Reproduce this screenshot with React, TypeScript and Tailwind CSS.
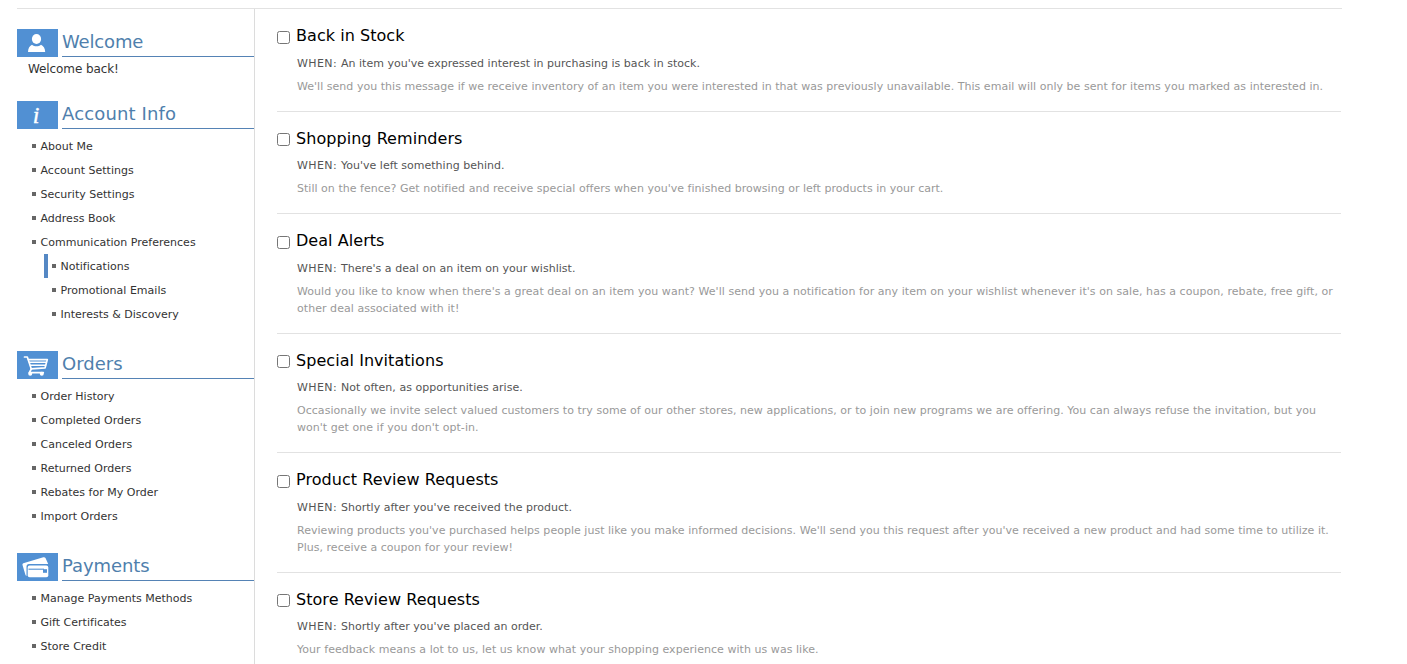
import type { ReactNode } from "react";

const UserIcon = () => (
  <svg width="41" height="28" viewBox="0 0 41 28" fill="#fff">
    <ellipse cx="19.500" cy="10" rx="4.600" ry="5" />
    <path d="M11 23c.2-3.500 1.300-6 4-7.200 2.500 2 6.500 2 9 0 2.700 1.200 4 3.700 4.200 7.200z" />
  </svg>
);

const InfoIcon = () => (
  <span className="mr-[3px] font-['Liberation_Serif',serif] text-[24px] leading-[28px] text-white italic [-webkit-text-stroke:0.4px_white]">i</span>
);

const CartIcon = () => (
  <svg width="41" height="28" viewBox="0 0 41 28" fill="none" stroke="#fff" strokeLinecap="round" strokeLinejoin="round">
    <path d="M7.500 6h2.800L14.300 18l-2 3.600h14" strokeWidth="1.700" />
    <path d="M11.500 8.600h18.800l-2.200 8.200-14 1" strokeWidth="1.700" />
    <path d="M12.500 11.300h16.500M13.500 14.200h15" strokeWidth="1.500" />
    <circle cx="13.200" cy="22.700" r="2" fill="#fff" stroke="none" />
    <circle cx="24.800" cy="22.700" r="2" fill="#fff" stroke="none" />
  </svg>
);

const WalletIcon = () => (
  <svg width="41" height="28" viewBox="0 0 41 28">
    <path d="M6.300 10.300 26.300 4.300q1.500-.4 2.200.8l2.700 5.900H12q-2.500 0-2.500 2.500v9.500q-.8-.3-1.100-1.200L5.500 12q-.4-1.300.8-1.700z" fill="#fff" />
    <path d="M12.700 12.400h16.600q2 0 2 2v7.900q0 2-2 2H12.700q-2 0-2-2v-7.900q0-2 2-2z" fill="#fff" />
    <path d="M11.500 16.200h15.500" stroke="#5190d3" strokeWidth="1.100" />
    <path d="M26 16.200h4v3.600h-4z" fill="#5190d3" />
  </svg>
);

function Heading({ icon, spacing, children }: { icon: ReactNode; spacing: string; children: ReactNode }) {
  return (
    <div className="flex h-7 gap-1">
      <div className="flex h-7 w-[41px] shrink-0 items-center justify-center bg-[#5190d3]">{icon}</div>
      <h2 className={`flex-1 border-b border-[#5583b5] text-[18px] leading-[25px] text-[#4f7fad] ${spacing}`}>{children}</h2>
    </div>
  );
}

function Link({ label, sub, active }: { label: string; sub?: boolean; active?: boolean }) {
  return (
    <li className={`flex h-6 items-center ${sub ? "ml-[27px]" : "ml-[11px]"}`}>
      <span className={`h-6 w-1 ${active ? "bg-[#5588c4]" : ""}`} />
      <span className={`mr-[4.500px] h-1 w-1 bg-[#666] ${sub ? "ml-1" : ""}`} />
      <a className="pt-[2px] text-[11px] leading-[18px] tracking-[0.010px] text-[#333]">{label}</a>
    </li>
  );
}

const items = [
  { title: "Back in Stock", when: "An item you've expressed interest in purchasing is back in stock.", lines: ["We'll send you this message if we receive inventory of an item you were interested in that was previously unavailable. This email will only be sent for items you marked as interested in."], size: "h-[103px]", roomy: true, spacing: "tracking-[0.030px]" },
  { title: "Shopping Reminders", when: "You've left something behind.", lines: ["Still on the fence? Get notified and receive special offers when you've finished browsing or left products in your cart."], size: "h-[102px]", roomy: false, spacing: "tracking-[0.025px]" },
  { title: "Deal Alerts", when: "There's a deal on an item on your wishlist.", lines: ["Would you like to know when there's a great deal on an item you want? We'll send you a notification for any item on your wishlist whenever it's on sale, has a coupon, rebate, free gift, or", "other deal associated with it!"], size: "h-[120px]", roomy: true, spacing: "tracking-[0.052px]" },
  { title: "Special Invitations", when: "Not often, as opportunities arise.", lines: ["Occasionally we invite select valued customers to try some of our other stores, new applications, or to join new programs we are offering. You can always refuse the invitation, but you", "won't get one if you don't opt-in."], size: "h-[119px]", roomy: false, spacing: "tracking-[0.038px]" },
  { title: "Product Review Requests", when: "Shortly after you've received the product.", lines: ["Reviewing products you've purchased helps people just like you make informed decisions. We'll send you this request after you've received a new product and had some time to utilize it.", "Plus, receive a coupon for your review!"], size: "h-[120px]", roomy: true, spacing: "tracking-[0.026px]" },
  { title: "Store Review Requests", when: "Shortly after you've placed an order.", lines: ["Your feedback means a lot to us, let us know what your shopping experience with us was like."], size: "h-[103px]", roomy: false, spacing: "tracking-[0.046px]" },
];

export default function App() {
  return (
    <div className="h-[664px] overflow-hidden bg-white pt-2 pl-[17px] font-['DejaVu_Sans',sans-serif] whitespace-nowrap">
      <div className="flex h-[700px] w-[1325px] border-t border-[#e2e2e2]">
        <aside className="w-[238px] shrink-0 border-r border-[#dcdcdc] pt-5">
          <Heading icon={<UserIcon />} spacing="tracking-[-0.150px]">Welcome</Heading>
          <p className="mb-8 h-3 pl-[11px] text-[12px] leading-[24px] tracking-[-0.100px] text-[#333]">Welcome back!</p>
          <Heading icon={<InfoIcon />} spacing="tracking-[0.150px]">Account Info</Heading>
          <ul className="mt-[5px] mb-[25px]">
            <Link label="About Me" />
            <Link label="Account Settings" />
            <Link label="Security Settings" />
            <Link label="Address Book" />
            <Link label="Communication Preferences" />
            <Link label="Notifications" sub active />
            <Link label="Promotional Emails" sub />
            <Link label="Interests & Discovery" sub />
          </ul>
          <Heading icon={<CartIcon />} spacing="tracking-normal">Orders</Heading>
          <ul className="mt-[5px] mb-[25px]">
            <Link label="Order History" />
            <Link label="Completed Orders" />
            <Link label="Canceled Orders" />
            <Link label="Returned Orders" />
            <Link label="Rebates for My Order" />
            <Link label="Import Orders" />
          </ul>
          <Heading icon={<WalletIcon />} spacing="tracking-[-0.080px]">Payments</Heading>
          <ul className="mt-[5px]">
            <Link label="Manage Payments Methods" />
            <Link label="Gift Certificates" />
            <Link label="Store Credit" />
          </ul>
        </aside>
        <main className="ml-[22px] w-[1064px]">
          {items.map((item) => (
            <section key={item.title} className={`flex border-b border-[#e2e2e2] ${item.size}`}>
              <input type="checkbox" className={`h-[13px] w-[13px] shrink-0 ${item.roomy ? "mt-[22px]" : "mt-[21px]"}`} />
              <div className="ml-[6px]">
                <h3 className={`mt-[18px] h-[18px] text-[16px] leading-[18px] tracking-[0.050px] text-black ${item.roomy ? "mb-[10px]" : "mb-[9px]"}`}>{item.title}</h3>
                <p className="ml-px h-[17px] text-[11px] leading-[17px] tracking-[0.020px] text-[#555]">
                  <span className="tracking-[0.400px]">WHEN: </span>
                  {item.when}
                </p>
                <div className={`mt-[6px] ml-px text-[11px] leading-[17px] text-[#999] ${item.spacing}`}>
                  {item.lines.map((line) => (
                    <p key={line}>{line}</p>
                  ))}
                </div>
              </div>
            </section>
          ))}
        </main>
      </div>
    </div>
  );
}
